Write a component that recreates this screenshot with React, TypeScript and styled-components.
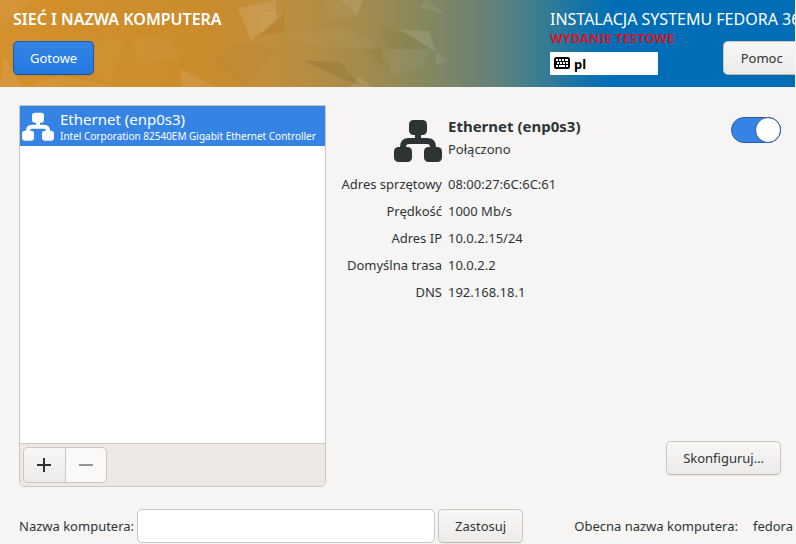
import React, { useState } from "react";
import styled, { createGlobalStyle } from "styled-components";

const GlobalStyle = createGlobalStyle`
  *, *::before { box-sizing: border-box; }
  body {
    margin: 0;
    overflow: hidden;
    background: #f6f5f4;
    color: #2e3436;
    font-family: "Noto Sans", sans-serif;
    font-size: 13px;
    line-height: 20px;
  }
`;

const Page = styled.div`
  min-height: 100vh;
  display: flex;
  flex-direction: column;
`;

const Header = styled.header`
  display: grid;
  grid-template-columns: 1fr 245px;
  height: 87px;
  margin-right: 1px;
  overflow: hidden;
  color: #fff;
  background: #006eb6;
  & > * { grid-row: 1; }
`;

const HeaderArt = styled.svg`
  grid-column: 1 / -1;
  width: 100%;
  height: 87px;
`;

const HeaderLeft = styled.div`
  grid-column: 1;
  display: flex;
  flex-direction: column;
  align-items: flex-start;
  gap: 12px;
  padding: 9px 13px;
`;

const HeaderRight = styled.div`
  grid-column: 2;
  display: grid;
  grid-template-columns: 108px auto;
  grid-template-rows: 20px 12px auto;
  column-gap: 65px;
  padding-top: 9px;
`;

const SpokeTitle = styled.h1`
  margin: 0;
  font-size: 16px;
  line-height: 20px;
  font-weight: 600;
  white-space: nowrap;
`;

const ProductTitle = styled.div`
  grid-column: 1 / -1;
  font-size: 16px;
  line-height: 20px;
  white-space: nowrap;
`;

const PreRelease = styled.div`
  grid-column: 1;
  grid-row: 2;
  color: #cc1b2b;
  font-size: 13px;
  line-height: 18px;
  font-weight: 700;
  white-space: nowrap;
`;

const Layout = styled.div`
  grid-column: 1;
  grid-row: 3;
  align-self: start;
  display: flex;
  align-items: center;
  gap: 4px;
  height: 23px;
  margin-top: 11px;
  padding: 0 4px;
  background: #fff;
  color: #000;
  font-weight: 700;
  svg { margin-bottom: 2px; }
`;

const Button = styled.button<{ $primary?: boolean }>`
  height: 34px;
  padding: 0 16px;
  border: 1px solid ${(p) => (p.$primary ? "#1b5bb0" : "#cdc7c2")};
  border-bottom-color: ${(p) => (p.$primary ? "#15539e" : "#bfb8b1")};
  border-radius: 5px;
  background: ${(p) =>
    p.$primary
      ? "linear-gradient(#3583e4, #2379e2)"
      : "linear-gradient(#f8f7f6, #edebe9)"};
  box-shadow: 0 1px 2px rgba(0, 0, 0, 0.07);
  color: ${(p) => (p.$primary ? "#fff" : "#2e3436")};
  font: inherit;
  white-space: nowrap;
`;

const HelpButton = styled(Button)`
  grid-column: 2;
  grid-row: 3;
`;

const Main = styled.main`
  flex: 1;
  display: grid;
  grid-template-columns: 307px 1fr;
  gap: 18px;
  padding: 18px 15px 22px 19px;
`;

const DevicePanel = styled.section`
  display: flex;
  flex-direction: column;
  border: 1px solid #cdc7c2;
  border-radius: 0 0 5px 5px;
  overflow: hidden;
`;

const DeviceList = styled.ul`
  flex: 1;
  margin: 0;
  padding: 0;
  list-style: none;
  background: #fff;
`;

const DeviceRow = styled.li`
  display: flex;
  align-items: center;
  gap: 6px;
  height: 40px;
  padding-left: 2px;
  background: #3584e4;
  color: #fff;
`;

const DeviceText = styled.div`
  flex: 1;
  min-width: 0;
  white-space: nowrap;
`;

const DeviceName = styled.div`
  font-size: 15px;
  line-height: 20px;
`;

const DeviceModel = styled.div`
  font-size: 10px;
  line-height: 14px;
`;

const Toolbar = styled.div`
  display: flex;
  height: 43px;
  padding: 3px;
  border-top: 1px solid #cdc7c2;
  background: #ebe8e6;
`;

const ToolButton = styled.button`
  display: grid;
  place-items: center;
  width: 43px;
  height: 36px;
  padding: 0 1px 0 0;
  border: 1px solid #cdc7c2;
  border-radius: 5px 0 0 5px;
  background: linear-gradient(#f8f7f6, #edebe9);
  color: #2e3436;
  & + & {
    width: 42px;
    margin-left: -1px;
    padding: 0;
    border-radius: 0 5px 5px 0;
  }
  &:disabled {
    background: #faf9f8;
    color: #929595;
  }
`;

const Details = styled.section`
  display: flex;
  flex-direction: column;
  justify-content: space-between;
  align-items: flex-end;
  padding: 11px 0 12px;
`;

const DetailsTop = styled.div`
  display: flex;
  justify-content: space-between;
  align-items: flex-start;
  width: 100%;
`;

const Info = styled.div`
  display: grid;
  grid-template-columns: 98px auto;
  column-gap: 6px;
`;

const InfoIcon = styled.div`
  justify-self: end;
  height: 48px;
`;

const InfoTitle = styled.h2`
  margin: 0;
  font-size: 15px;
  line-height: 20px;
  font-weight: 700;
  white-space: nowrap;
`;

const InfoStatus = styled.div`
  line-height: 26px;
`;

const Facts = styled.dl`
  grid-column: 1 / -1;
  display: grid;
  grid-template-columns: 98px auto;
  column-gap: 6px;
  margin: 7px 0 0;
  line-height: 27px;
  white-space: nowrap;
  dt { justify-self: end; }
  dd { margin: 0; }
`;

const Switch = styled.input`
  appearance: none;
  display: flex;
  width: 50px;
  height: 26px;
  margin: 1px 0 0;
  border: 1px solid #c0bab4;
  border-radius: 13px;
  background: #e1dedb;
  &::before {
    content: "";
    width: 26px;
    height: 26px;
    margin: -1px;
    border: 1px solid #bab4ae;
    border-radius: 50%;
    background: #fff;
  }
  &:checked {
    justify-content: flex-end;
    border-color: #2a5ba0;
    background: #3584e4;
  }
  &:checked::before { border-color: #2a5ba0; }
`;

const HostForm = styled.form`
  display: flex;
  align-items: center;
  gap: 3px;
  height: 35px;
  padding: 0 3px 1px 19px;
  white-space: nowrap;
`;

const HostInput = styled.input`
  width: 298px;
  height: 34px;
  padding: 0 8px;
  border: 1px solid #cdc7c2;
  border-radius: 5px;
  background: #fff;
  font: inherit;
`;

const CurrentHost = styled.div`
  display: flex;
  gap: 15px;
  margin-left: auto;
`;

const NetworkIcon = ({ size }: { size: number }) => (
  <svg width={size} height={size} viewBox="0 0 48 48" aria-hidden="true">
    <g fill="currentColor">
      <rect x="15" y="4" width="18" height="15" rx="4.5" />
      <rect x="0" y="31" width="18" height="15" rx="4.5" />
      <rect x="30" y="31" width="18" height="15" rx="4.5" />
    </g>
    <path
      d="M24 18v7M9 33v-2q0-6 6-6h18q6 0 6 6v2"
      fill="none"
      stroke="currentColor"
      strokeWidth="6"
    />
  </svg>
);

const KeyboardIcon = () => (
  <svg width="16" height="12" viewBox="0 0 16 12" aria-hidden="true">
    <rect width="16" height="12" rx="2.5" />
    <path
      d="M2 3h2M5 3h2M8 3h2M11 3h3M3 6h2M6 6h2M9 6h2M12 6h2M2 9h2M5 9h6M12 9h2"
      stroke="#fff"
      strokeWidth="2"
    />
  </svg>
);

const shards: [string, string, number][] = [
  ["0,0 30,0 0,28", "#fff", 0.05],
  ["4,56 22,87 0,87", "#fff", 0.07],
  ["22,87 60,75 118,87", "#fff", 0.05],
  ["130,40 165,32 180,58 140,66", "#fff", 0.03],
  ["105,30 125,45 108,87 90,60", "#fff", 0.03],
  ["238,8 276,0 276,20 251,41", "#fff", 0.1],
  ["180,69 216,87 182,87", "#fff", 0.09],
  ["226,46 250,42 276,48 245,87 215,62", "#000", 0.02],
  ["260,12 285,12 260,34", "#fff", 0.04],
  ["285,13 260,36 284,32", "#a05000", 0.12],
  ["304,61 340,62 356,80 366,87 340,78", "#5a4a10", 0.14],
  ["340,0 363,0 357,16", "#fff", 0.1],
  ["325,0 340,0 357,16 330,22", "#fff", 0.04],
  ["364,50 382,47 384,66", "#6b6300", 0.1],
  ["384,50 430,48 424,66 392,76", "#fff", 0.04],
  ["380,28 408,33 430,50 388,48", "#6b5a00", 0.08],
  ["400,30 429,31 436,52", "#fff", 0.1],
  ["436,52 448,61 436,64", "#fff", 0.08],
  ["426,0 448,16 420,7", "#fff", 0.06],
  ["350,87 360,77 372,87", "#fff", 0.1],
  ["285,36 340,26 375,40 370,50 310,45", "#fff", 0.03],
];

const HeaderBackdrop = () => (
  <HeaderArt viewBox="0 0 795 87" preserveAspectRatio="xMinYMid slice" aria-hidden="true">
    <defs>
      <linearGradient id="sky">
        <stop offset="0" stopColor="#d4902c" />
        <stop offset="0.25" stopColor="#cb8c2b" />
        <stop offset="0.34" stopColor="#c08e3c" />
        <stop offset="0.44" stopColor="#a98b49" />
        <stop offset="0.54" stopColor="#84875f" />
        <stop offset="0.62" stopColor="#64817a" />
        <stop offset="0.67" stopColor="#417e8d" />
        <stop offset="0.72" stopColor="#1c75a4" />
        <stop offset="0.77" stopColor="#006eb6" />
      </linearGradient>
    </defs>
    <rect width="795" height="87" fill="url(#sky)" />
    {shards.map(([points, fill, opacity]) => (
      <polygon key={points} points={points} fill={fill} opacity={opacity} />
    ))}
  </HeaderArt>
);

const facts: [string, string][] = [
  ["Adres sprzętowy", "08:00:27:6C:6C:61"],
  ["Prędkość", "1000 Mb/s"],
  ["Adres IP", "10.0.2.15/24"],
  ["Domyślna trasa", "10.0.2.2"],
  ["DNS", "192.168.18.1"],
];

export default function App() {
  const [enabled, setEnabled] = useState(true);
  const [host, setHost] = useState("");

  return (
    <Page>
      <GlobalStyle />
      <Header>
        <HeaderBackdrop />
        <HeaderLeft>
          <SpokeTitle>SIEĆ I NAZWA KOMPUTERA</SpokeTitle>
          <Button type="button" $primary>Gotowe</Button>
        </HeaderLeft>
        <HeaderRight>
          <ProductTitle>INSTALACJA SYSTEMU FEDORA 36</ProductTitle>
          <PreRelease>WYDANIE TESTOWE</PreRelease>
          <Layout>
            <KeyboardIcon />
            <span>pl</span>
          </Layout>
          <HelpButton type="button">Pomoc</HelpButton>
        </HeaderRight>
      </Header>
      <Main>
        <DevicePanel>
          <DeviceList>
            <DeviceRow>
              <NetworkIcon size={32} />
              <DeviceText>
                <DeviceName>Ethernet (enp0s3)</DeviceName>
                <DeviceModel>Intel Corporation 82540EM Gigabit Ethernet Controller</DeviceModel>
              </DeviceText>
            </DeviceRow>
          </DeviceList>
          <Toolbar>
            <ToolButton type="button" aria-label="Dodaj">
              <svg width="14" height="14" viewBox="0 0 14 14" aria-hidden="true">
                <path d="M0 7h14M7 0v14" stroke="currentColor" strokeWidth="2" />
              </svg>
            </ToolButton>
            <ToolButton type="button" aria-label="Usuń" disabled>
              <svg width="14" height="14" viewBox="0 0 14 14" aria-hidden="true">
                <path d="M0 7h14" stroke="currentColor" strokeWidth="2" />
              </svg>
            </ToolButton>
          </Toolbar>
        </DevicePanel>
        <Details>
          <DetailsTop>
            <Info>
              <InfoIcon><NetworkIcon size={48} /></InfoIcon>
              <div>
                <InfoTitle>Ethernet (enp0s3)</InfoTitle>
                <InfoStatus>Połączono</InfoStatus>
              </div>
              <Facts>
                {facts.map(([name, value]) => (
                  <React.Fragment key={name}>
                    <dt>{name}</dt>
                    <dd>{value}</dd>
                  </React.Fragment>
                ))}
              </Facts>
            </Info>
            <Switch
              type="checkbox"
              role="switch"
              aria-label="Ethernet (enp0s3)"
              checked={enabled}
              onChange={(e) => setEnabled(e.target.checked)}
            />
          </DetailsTop>
          <Button type="button">Skonfiguruj…</Button>
        </Details>
      </Main>
      <HostForm onSubmit={(e) => e.preventDefault()}>
        <label htmlFor="host">Nazwa komputera:</label>
        <HostInput id="host" value={host} onChange={(e) => setHost(e.target.value)} />
        <Button type="submit">Zastosuj</Button>
        <CurrentHost>
          <span>Obecna nazwa komputera:</span>
          <span>fedora</span>
        </CurrentHost>
      </HostForm>
    </Page>
  );
}
